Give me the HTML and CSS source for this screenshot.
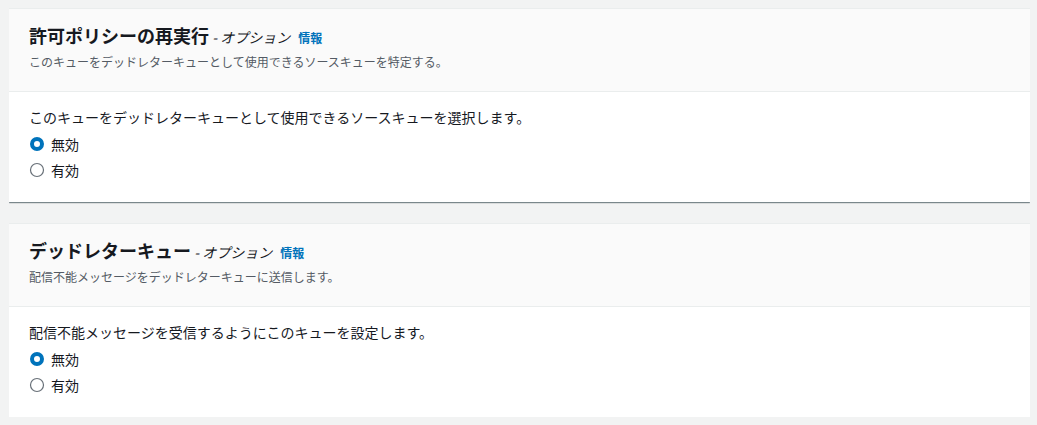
FILE: index.html
```html
<!DOCTYPE html>
<html lang="ja">
<head>
	<meta charset="utf-8">
	<title>キューの設定</title>
	<link rel="stylesheet" href="styles.css">
</head>
<body>
	<div class="page">
		<!-- 許可ポリシーの再実行 -->
		<section class="card">
			<header class="card-head">
				<h2 class="title">許可ポリシーの再実行<span class="opt"> - オプション</span><a class="info" href="#">情報</a></h2>
				<p class="desc">このキューをデッドレターキューとして使用できるソースキューを特定する。</p>
			</header>
			<div class="card-body">
				<p class="label">このキューをデッドレターキューとして使用できるソースキューを選択します。</p>
				<label class="radio">
					<svg class="dot" viewBox="0 0 16 16" width="16" height="16"><circle class="on" cx="8" cy="8" r="5"/></svg>
					<span>無効</span>
				</label>
				<label class="radio">
					<svg class="dot" viewBox="0 0 16 16" width="16" height="16"><circle class="off" cx="8" cy="8" r="6.5"/></svg>
					<span>有効</span>
				</label>
			</div>
		</section>

		<!-- デッドレターキュー -->
		<section class="card">
			<header class="card-head">
				<h2 class="title">デッドレターキュー<span class="opt"> - オプション</span><a class="info" href="#">情報</a></h2>
				<p class="desc">配信不能メッセージをデッドレターキューに送信します。</p>
			</header>
			<div class="card-body">
				<p class="label">配信不能メッセージを受信するようにこのキューを設定します。</p>
				<label class="radio">
					<svg class="dot" viewBox="0 0 16 16" width="16" height="16"><circle class="on" cx="8" cy="8" r="5"/></svg>
					<span>無効</span>
				</label>
				<label class="radio">
					<svg class="dot" viewBox="0 0 16 16" width="16" height="16"><circle class="off" cx="8" cy="8" r="6.5"/></svg>
					<span>有効</span>
				</label>
			</div>
		</section>
	</div>
</body>
</html>
```

FILE: styles.css
```css
body {
	margin: 8px 7px 8px 9px;
	background: #f2f3f3;
	font-family: "Noto Sans CJK JP", "Noto Sans", sans-serif;
	color: #16191f;
}
.page { display: flex; flex-direction: column; gap: 21px; }

.card {
	background: #fff;
	border-top: 1px solid #eaeded;
	box-shadow: 0 1px 1px 0 rgba(0, 28, 36, .3),
		1px 1px 1px 0 rgba(0, 28, 36, .15),
		-1px 1px 1px 0 rgba(0, 28, 36, .15);
}
.card-head {
	background: #fafafa;
	border-bottom: 1px solid #eaeded;
	padding: 15px 20px 21px;
}
.title {
	margin: 0;
	font-size: 18px;
	line-height: 22px;
	font-weight: 700;
}
.opt { font-size: 14px; line-height: 1; font-weight: 400; font-style: italic; }
.info {
	margin-left: 8px;
	font-size: 12px;
	line-height: 1;
	font-weight: 700;
	color: #0073bb;
	text-decoration: none;
}
.desc {
	margin: 8px 0 0;
	font-size: 12px;
	line-height: 16px;
	color: #545b64;
}

.card-body {
	display: flex;
	flex-direction: column;
	gap: 4px;
	padding: 14px 20px 21px;
	font-size: 14px;
	line-height: 22px;
}
.label { margin: 0 0 1px; }
.radio { display: flex; align-items: center; gap: 6px; }
.dot { display: block; }
.dot .on { fill: #fff; stroke: #0073bb; stroke-width: 4; }
.dot .off { fill: #fff; stroke: #687078; stroke-width: 1.2; }
```
